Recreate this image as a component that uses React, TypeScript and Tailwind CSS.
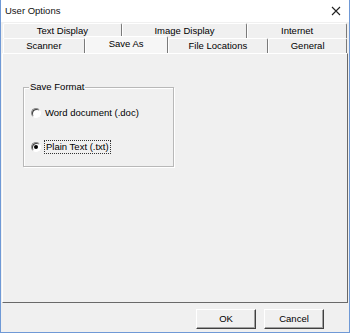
import React from "react";

const font = { fontFamily: '"Liberation Sans", Arial, sans-serif' };

function Tab({ label, w, selected = false }: { label: string; w: number; selected?: boolean }) {
  return (
    <div
      className={
        "flex items-center justify-center border-l border-t border-r border-l-white border-t-white border-r-[#7a7a7a] rounded-t-[2px] " +
        (selected ? "bg-[#f6f6f6] h-[17px] -mt-[2px] relative z-10 -mb-[1px] pb-[2px]" : "bg-[#f0f0f0] h-[15px]")
      }
      style={{ width: w }}
    >
      <span className="text-[9.5px] leading-none text-black">{label}</span>
    </div>
  );
}

function Radio({ checked }: { checked?: boolean }) {
  return (
    <span className="w-[10px] h-[10px] rounded-full border border-t-[#8a8a8a] border-l-[#8a8a8a] border-r-white border-b-white bg-white flex items-center justify-center shadow-[inset_1px_1px_0_#404040]">
      {checked && <span className="w-[4px] h-[4px] rounded-full bg-black" />}
    </span>
  );
}

export default function App() {
  return (
    <div
      className="w-[350px] h-[333px] bg-[#f0f0f0] border-l border-r border-b border-[#6f99d6] flex flex-col overflow-hidden"
      style={font}
    >
      {/* Title bar */}
      <div className="h-[22px] bg-white flex items-center justify-between pl-[4px] pr-[8px]">
        <span className="text-[9.5px] text-[#111]">User Options</span>
        <svg width="10" height="10" viewBox="0 0 10 10">
          <path d="M1 1 L9 9 M9 1 L1 9" stroke="#222" strokeWidth="1.1" />
        </svg>
      </div>

      {/* Tabs */}
      <div className="px-[2px] pt-[1px]">
        <div className="flex">
          <Tab label="Text Display" w={119} />
          <Tab label="Image Display" w={126} />
          <Tab label="Internet" w={100} />
        </div>
        <div className="flex">
          <Tab label="Scanner" w={82} />
          <Tab label="Save As" w={83} selected />
          <Tab label="File Locations" w={101} />
          <Tab label="General" w={79} />
        </div>
      </div>

      {/* Panel */}
      <div className="mx-[1px] h-[250px] border border-t-white border-l-white border-r-[#696969] border-b-[#696969] bg-[#f0f0f0]">
        <div className="pl-[20px] pt-[33px]">
          <div className="relative w-[151px] h-[80px] border border-[#b8b8b8] shadow-[inset_1px_1px_0_white,1px_1px_0_white]">
            <span className="absolute left-[5px] -top-[6px] bg-[#f0f0f0] px-[1px] text-[9.5px] leading-none text-black">
              Save Format
            </span>
            <div className="pl-[7px] pt-[19px] flex flex-col">
              <div className="flex items-center gap-[4px] h-[12px]">
                <Radio />
                <span className="text-[9.5px] leading-none text-black">Word document (.doc)</span>
              </div>
              <div className="flex items-center gap-[3px] h-[12px] mt-[22px]">
                <Radio checked />
                <span className="text-[9.5px] leading-none text-black border border-dotted border-[#333] px-[1px] py-[1px]">
                  Plain Text (.txt)
                </span>
              </div>
            </div>
          </div>
        </div>
      </div>

      {/* Buttons */}
      <div className="flex-1 flex justify-end items-start pt-[6px] pr-[25px] gap-[8px]">
        <button className="w-[60px] h-[20px] bg-[#f0f0f0] border border-t-white border-l-white border-r-[#404040] border-b-[#404040] shadow-[inset_-1px_-1px_0_#a0a0a0] text-[9.5px] text-black">
          OK
        </button>
        <button className="w-[60px] h-[20px] bg-[#f0f0f0] border border-t-white border-l-white border-r-[#404040] border-b-[#404040] shadow-[inset_-1px_-1px_0_#a0a0a0] text-[9.5px] text-black">
          Cancel
        </button>
      </div>
    </div>
  );
}
